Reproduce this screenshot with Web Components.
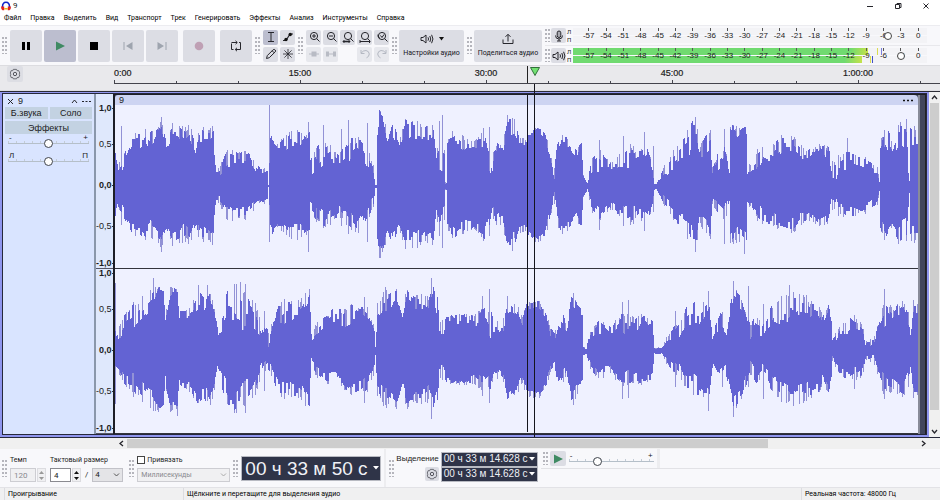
<!DOCTYPE html>
<html lang="ru">
<head>
<meta charset="utf-8">
<title>9</title>
<style>
html,body{margin:0;height:100%}
body{font:9px/12px "Liberation Sans",Arial,sans-serif;color:#1c1c22;background:#fff;overflow:hidden}
</style>
</head>
<body>
<audio-app></audio-app>
<script>
const ui = 'Roboto,"Noto Sans",sans-serif';
function define(name, render, after) {
  customElements.define(name, class extends HTMLElement {
    connectedCallback() {
      if (this.shadowRoot) return;
      const root = this.attachShadow({mode: 'open'});
      root.innerHTML = '<style>*{box-sizing:border-box}:host{display:block;box-sizing:border-box}</style>' + render(this);
      if (after) after(this, root);
    }
  });
}
const A = (el, n, d = '') => el.getAttribute(n) ?? d;

/* Icons */
const S = (w, h, body, extra = '') => `<svg width="${w}" height="${h}" viewBox="0 0 ${w} ${h}" fill="none" stroke="#26262c" stroke-width="1" ${extra}>${body}</svg>`;
const lens = '<circle cx="6" cy="5" r="3.6"/><path d="M8.6 7.6 11.5 10.5"/>';
const gearPath = '<path d="M4 1.2h4l.7 1.6 1.9-.1L12 5.8 10.9 7 12 8 10.6 11.2l-1.9-.1L8 12.7H4l-.7-1.6-1.9.1L0.3 8 1.3 7 .3 5.8 1.4 2.7l1.9.1z" transform="translate(1 .4) scale(.82)" stroke="#55565e"/><circle cx="6" cy="6" r="1.7" stroke="#55565e"/>';
const icons = {
  pause: S(12,12,'<path d="M2 2h3v8H2zM7 2h3v8H7z" fill="#000" stroke="none"/>'),
  play: S(12,12,'<path d="M2 1.5 11 6 2 10.500z" fill="#3f8a63" stroke="none"/>'),
  stop: S(12,12,'<path d="M2 2h8v8H2z" fill="#000" stroke="none"/>'),
  prev: S(12,12,'<path d="M2 2v8" stroke="#9ea4ae"/><path d="M10.500 2v8L4 6z" fill="#9ea4ae" stroke="none"/>'),
  next: S(12,12,'<path d="M10 2v8" stroke="#9ea4ae"/><path d="M1.500 2v8L8 6z" fill="#9ea4ae" stroke="none"/>'),
  record: S(12,12,'<circle cx="6" cy="6" r="4.300" fill="#bfa0b4" stroke="none"/>'),
  loop: S(12,12,'<path d="M3.500 9.500H1.500V3.500M1.500 2.500H7M9 2.500H10.500V9.500H5.500M5.500.8 7.300 2.500 5.500 4.200M7 7.800 5.200 9.500 7 11.200"/>'),
  ibeam: S(12,12,'<path d="M3 1.500h6M3 10.500h6M6 1.500v9"/>'),
  envelope: S(12,12,'<path d="M1 9.500H4L8 3h3" stroke-width="1.200"/><circle cx="4" cy="8.500" r="1.700" fill="#111" stroke="none"/><circle cx="8.200" cy="3.500" r="1.700" fill="#111" stroke="none"/>'),
  pencil: S(12,12,'<path d="M1.500 10.500 2.300 7.600 8.200 1.700Q9.300 1 10.200 2T10.200 3.900L4.300 9.700zM7.200 2.800 9.200 4.800"/>'),
  star: S(12,12,'<path d="M6 1v10M1 6h10M2.400 2.400 9.600 9.600M9.600 2.400 2.400 9.600" stroke-width=".8"/>'),
  zin: S(12,12, lens + '<path d="M4 5h4M6 3v4"/>'),
  zout: S(12,12, lens + '<path d="M4 5h4"/>'),
  zsel: S(12,12, lens + '<path d="M1 10.500h7" stroke-width="1.600"/><path d="M2.500 9 1 10.500 2.500 12M6.500 9 8 10.500 6.500 12" stroke-width=".8"/>'),
  zfit: S(12,12, lens + '<path d="M1 10.500h9M1 9v3M10.500 9v3"/>'),
  ztog: S(12,12, lens + '<path d="M4 7.500Q1 6 2 3.500M4.500 4.500 6 6.500 8 3.500"/>'),
  trim: S(12,12,'<path d="M1 6h10" stroke="#b8bbc4"/><path d="M3.500 3.500h5v5h-5z" fill="#b8bbc4" stroke="none"/>'),
  silence: S(12,12,'<path d="M1 3.500h3v5H1zM8 3.500h3v5H8z" fill="#b8bbc4" stroke="none"/><path d="M4 6h4" stroke="#b8bbc4"/>'),
  undo: S(12,12,'<path d="M2 2v3.500h3.500M2 5.300Q4 2.300 7 2.500 10 3 10.300 6 10 9 7.500 9.800" stroke="#b4b8c2"/>'),
  redo: S(12,12,'<path d="M10 2v3.500H6.500M10 5.300Q8 2.300 5 2.500 2 3 1.700 6 2 9 4.500 9.800" stroke="#b4b8c2"/>'),
  speaker: S(14,12,'<path d="M1 4.500h2L6 2v8L3 7.500H1z"/><path d="M8 4.300Q9 6 8 7.700M9.800 3Q11.700 6 9.800 9M11.600 1.800Q14.300 6 11.600 10.200"/>'),
  share: S(12,12,'<path d="M1 6.500v4h10v-4M6 8.500V1.500M3.500 3.800 6 1.300 8.500 3.800"/>'),
  mic: S(12,12,'<rect x="4.200" y="1" width="3.600" height="6.500" rx="1.800" fill="#aaabb2"/><path d="M2.500 5.500Q2.500 9 6 9T9.500 5.500M6 9v2M4 11h4"/>'),
  gear: S(12,12, gearPath)
};

define('ui-icon', el => `<style>:host{display:inline-flex}svg{display:block}</style>${icons[A(el,'name')]}`);

define('tool-button', el => `<style>
:host{display:block;flex:none;width:var(--w,32px);height:var(--h,32px)}
button{width:100%;height:100%;border:0;border-radius:2px;padding:0;margin:0;background:var(--bg,#dcdde4);color:#16161c;
 font:7px/12px ${ui};display:flex;flex-direction:column;align-items:center;justify-content:center;gap:2px;white-space:nowrap}
</style><button aria-label="${A(el,'label')}"><slot></slot></button>`);

define('grip-handle', () => `<style>:host{width:5px;height:17px;flex:none;
background:radial-gradient(circle at 1px 1px,#b5b5bc 0 .8px,transparent 1px) 0 0/3px 4px}</style>`);

define('menu-bar', () => `<style>
nav{display:flex;gap:9px;padding:0 4px;height:14px;align-items:center}
button{border:0;background:none;padding:0;margin:0;font:7px/12px ${ui};color:#000}
</style><nav>${['Файл','Правка','Выделить','Вид','Транспорт','Трек','Генерировать','Эффекты','Анализ','Инструменты','Справка'].map(t=>`<button>${t}</button>`).join('')}</nav>`);

define('title-bar', () => `<style>
:host{display:flex;align-items:center;height:11px;padding-left:1px;font:8px/11px ${ui}}
span{flex:1;margin-left:2px}
button{border:0;background:none;width:28px;height:11px;padding:0;display:grid;place-items:center}
</style>${S(10,10,'<path d="M1.500 6Q1.500 1.200 5 1.200T8.500 6" stroke="#1226c9" stroke-width="1.500"/><path d="M0 5.500h3.200v3.700H1.500Q0 8.500 0 5.500zM10 5.500H6.800v3.700h1.700Q10 8.500 10 5.500z" fill="#e2211d" stroke="none"/><path d="M3.200 7h3.600v1.500H3.200z" fill="#f5b31c" stroke="none"/>')}
<span>9</span>
<button aria-label="Свернуть">${S(8,8,'<path d="M1 4.500h6"/>')}</button>
<button aria-label="Развернуть">${S(8,8,'<path d="M1.500 2.500h4v4h-4zM3 2.500V1.500h4v4H5.500"/>')}</button>
<button aria-label="Закрыть">${S(8,8,'<path d="M1.500 1.500 6.500 6.500M6.500 1.500 1.500 6.500"/>')}</button>`);

define('transport-bar', () => `<style>
:host{display:flex;align-items:center;gap:2px;padding-left:2px}
grip-handle{margin-right:1px}.rec{margin-left:3px}.loop{margin-left:3px}
.on{--bg:#bcbecf}
</style><grip-handle></grip-handle>` +
[['pause','Пауза'],['play','Воспроизвести','on'],['stop','Стоп'],['prev','К началу'],['next','К концу'],['record','Запись','rec'],['loop','Цикл','loop']]
 .map(([i,l,c=''])=>`<tool-button class="${c}" label="${l}"><ui-icon name="${i}"></ui-icon></tool-button>`).join(''));

define('tool-grid', el => `<style>
:host{display:flex;align-items:center;gap:3px}
div{display:grid;grid-template-columns:repeat(${A(el,'cols')},15px);gap:2px}
tool-button{--w:15px;--h:15px}.on{--bg:#bcbecf}.off{--bg:#e7e8ed}
</style><grip-handle></grip-handle><div>${A(el,'tools').split(' ').map(t=>{
 const [n,c=''] = t.split(':');
 return n === '-' ? '<i></i>' : `<tool-button class="${c}" label="${n}"><ui-icon name="${n}"></ui-icon></tool-button>`;
}).join('')}</div>`);

define('meter-bar', el => {
  const live = el.hasAttribute('live');
  const cells = Array.from({length:20},(_,i)=>`<span>${i*3-57}</span>`).join('');
  return `<style>
:host{display:flex;align-items:center;height:19px;flex:1;min-width:0;padding:0 13px 0 0;gap:1px}
grip-handle{height:13px}
tool-button{--w:15px;--h:15px}
.ch{display:flex;flex-direction:column;font:6px/8px ${ui};width:5px;height:16px}
.m{flex:1;position:relative;height:15px;display:grid;grid-template-rows:7px 7px;gap:1px}
.bar{background:#f3f3f6}
.bar i{display:block;height:100%;background:linear-gradient(90deg,#70da70 0 94%,#c5e24a)}
.a i{width:83.4%}.b i{width:81.500%}
.scale{position:absolute;inset:0;padding-left:7px;display:flex;font:8px/15px "Liberation Sans",sans-serif;color:#222}
.scale span{flex:1 1 0;min-width:0;display:flex;justify-content:center;background:linear-gradient(#555,#555) center top/1px 3px no-repeat}
.pk{position:absolute;width:1px;height:7px;top:0;background:#d9dc52;box-shadow:4px 0 #7a80dd}
.pk.lo{top:8px;box-shadow:2px 0 #4350c8}
input{position:absolute;inset:0;width:100%;height:15px;margin:0;appearance:none;background:none}
input::-webkit-slider-thumb{appearance:none;width:8px;height:8px;border:1px solid #444;border-radius:50%;background:#fff}
</style><grip-handle></grip-handle><tool-button label="${A(el,'label')}"><ui-icon name="${A(el,'icon')}"></ui-icon></tool-button>
<div class="ch"><span>Л</span><span>П</span></div>
<div class="m"><div class="bar a">${live?'<i></i>':''}</div><div class="bar b">${live?'<i></i>':''}</div>
<div class="scale">${cells}</div>${live?'<div class="pk" style="left:86%"></div><div class="pk lo" style="left:84%"></div>':''}
<input type="range" aria-label="${A(el,'label')}" min="0" max="1000" value="${A(el,'value')}"></div>`;
});

define('top-tools', () => `<style>
:host{display:flex;height:40px;background:#f8f8fb;border-top:1px solid #ececf0;gap:3px;align-items:stretch}
.big{display:flex;align-items:center;gap:2px}
.set{--w:65px;--h:32px}.share{--w:68px;--h:32px}
.meters{flex:1;min-width:0;display:flex;flex-direction:column}
.meters meter-bar+meter-bar{border-top:1px solid #e8e8ec;height:20px}
.row{display:flex;gap:5px;align-items:center}
</style>
<transport-bar></transport-bar>
<tool-grid cols="2" tools="ibeam:on envelope pencil star"></tool-grid>
<tool-grid cols="5" tools="zin zout zsel zfit ztog trim:off silence:off - undo:off redo:off"></tool-grid>
<div class="big"><grip-handle></grip-handle><tool-button class="set" label="Настройки аудио"><span class="row"><ui-icon name="speaker"></ui-icon>${S(5,4,'<path d="M0 0h5L2.500 3.500z" fill="#111" stroke="none"/>')}</span>Настройки аудио</tool-button></div>
<div class="big"><grip-handle></grip-handle><tool-button class="share" label="Поделиться аудио"><ui-icon name="share"></ui-icon>Поделиться аудио</tool-button></div>
<div class="meters"><meter-bar icon="mic" label="Уровень записи" value="900"></meter-bar><meter-bar live icon="speaker" label="Уровень воспроизведения" value="936"></meter-bar></div>`);

define('time-ruler', () => `<style>
:host{display:flex;height:26px;background:#e9e9ec;border-top:1px solid #dcdce0;border-bottom:1px solid #dedee2}
.opt{width:114px;flex:none;padding:0 0 0 7px}
.opt tool-button{--w:16px;--h:16px;--bg:#dddee4}
.scale{flex:1;position:relative;height:18px;border-bottom:1px solid #44444c}
.labels{display:flex;font:9px/14px "Liberation Sans",sans-serif;-webkit-text-stroke:.2px #222}
.labels span{flex:186 1 0;text-align:center}
.labels span:first-child{flex-grow:93;text-align:left}
.labels span:last-child{flex-grow:164;padding-left:11px}
.ticks{display:grid;grid-template-columns:repeat(13,62fr) 20fr;height:3px}
.ticks i{border-left:1px solid #44444c;margin-top:1px}
.ticks i:nth-child(3n+1){margin-top:0}
.cur{position:absolute;left:50%;top:0;bottom:0;width:1px;background:#222}
.head{position:absolute;left:calc(50% + 3px);top:1px}
</style><div class="opt"><tool-button label="Параметры шкалы"><ui-icon name="gear"></ui-icon></tool-button></div>
<div class="scale"><div class="labels"><span>0:00</span><span>15:00</span><span>30:00</span><span>45:00</span><span>1:00:00</span></div>
<div class="ticks">${'<i></i>'.repeat(14)}</div><div class="cur"></div>
<div class="head">${S(10,9,'<path d="M.5.5h9L5 8.500z" fill="#72e072" stroke="#31703a"/>')}</div></div>`);

define('knob-slider', el => `<style>
.ends{display:flex;justify-content:space-between;font:8px/8px "Liberation Sans",sans-serif;padding:0 1px}
input{display:block;width:100%;height:9px;margin:-3px 0 0;appearance:none;
 background:repeating-linear-gradient(90deg,#c3ccd6 0 1px,transparent 1px 8px) 0 2px/100% 2px no-repeat,linear-gradient(#b5bfc9,#b5bfc9) 0 4px/100% 1px no-repeat}
input::-webkit-slider-thumb{appearance:none;width:9px;height:9px;border:1px solid #40444c;border-radius:50%;background:#fff}
</style><div class="ends"><span>${A(el,'lo')}</span><span>${A(el,'hi')}</span></div>
<input type="range" aria-label="${A(el,'label')}" min="0" max="100" value="${A(el,'value','50')}">`);

define('track-panel', () => `<style>
:host{width:93px;background:#d9e4ff;border-right:2px solid #8a97ab;padding:2px 2px 0 2px;flex:none}
header{display:flex;align-items:center;gap:4px;height:10px;padding:0 1px 0 2px}
header span{flex:1}
header button{border:0;background:none;padding:0;display:flex}
.btns{display:grid;grid-template-columns:1fr 1fr;gap:2px;margin-top:1px}
.btns button{border:0;padding:0;height:12px;background:#c3d2e2;font:9px/12px "Liberation Sans",sans-serif;color:#1c1c22}
.btns button:last-child{grid-column:span 2;height:13px}
knob-slider{margin:0 3px}knob-slider+knob-slider{margin-top:4px}
</style><header><button aria-label="Закрыть">${S(7,7,'<path d="M1 1 6 6M6 1 1 6"/>')}</button><span>9</span>
<button aria-label="Свернуть">${S(7,5,'<path d="M1 4 3.500 1 6 4"/>')}</button><button aria-label="Меню">${S(9,3,'<path d="M0 1.500h2M3.500 1.500h2M7 1.500h2"/>')}</button></header>
<div class="btns"><button>Б.звука</button><button>Соло</button><button>Эффекты</button></div>
<knob-slider lo="-" hi="+" label="Громкость"></knob-slider><knob-slider lo="Л" hi="П" label="Панорама"></knob-slider>`);

define('amp-ruler', () => `<style>
:host{display:flex;flex-direction:column;width:17px;flex:none;background:#dfe8fc;padding-top:10px}
.c{flex:164 1 0;display:grid;grid-template-rows:1fr 2fr 2fr 2fr 1fr;align-items:center;text-align:right;border-bottom:1px solid #556}
.c+.c{flex-grow:165}
span{font:9px/9px "Liberation Sans",sans-serif;padding-right:2px;white-space:nowrap;justify-self:end;
 background:linear-gradient(#334,#334) right center/2px 1px no-repeat}
span:first-child,span:nth-child(3),span:last-child{font-weight:bold}
span:first-child{align-self:start}span:last-child{align-self:end}
</style>` + ('<div class="c"><span>1,0</span><span>0,5</span><span>0,0</span><span>-0,5</span><span>-1,0</span></div>').repeat(2));

/* Envelope points: position, sustained level, transient level */
const ENV = [
`115 28 35,118 15 25,122 17 32,127 30 45,131 40 53,138 38 55,145 42 60,150 35 57,157 46 62,161 52 70,166 38 50,172 48 66,178 48 63,185 36 60,190 45 63,196 27 45,199 40 62,205 45 58,213 50 60,214 30 36,216 8 20,220 10 22,226 18 36,232 20 40,240 22 36,248 20 37,255 12 25,260 8 20,267 8 18,268 1 2,270 40 50,272 45 54,277 37 45,284 35 53,290 40 56,296 38 58,305 45 52,309 45 58,310 12 28,316 15 40,324 18 48,330 20 45,340 20 34,350 22 50,357 38 50,362 25 50,368 18 38,374 10 25,376 1 2,377 1 2,378 50 62,380 66 78,384 62 70,388 35 60,393 50 68,400 40 46,405 45 68,415 48 68,425 45 60,434 50 63,437 18 36,440 10 45,445 10 40,446 3 5,447 4 6,448 40 47,455 40 60,465 35 50,475 38 48,485 40 60,487 30 50,490 15 45,493 10 25,495 30 45,503 26 42,508 48 70,515 48 68,520 40 50,527 42 48,529 50 55,537 56 60,545 48 56,550 25 40,555 5 20,558 28 45,562 38 53,570 38 48,577 28 40,582 42 45,584 8 12,588 3 6,592 12 28,600 14 38,610 15 25,620 18 35,630 18 42,640 20 38,648 28 40,653 14 22,655 3 6,657 2 5,665 10 22,672 14 35,680 20 50,690 25 60,694 50 68,697 48 70,700 30 40,705 28 50,711 35 58,713 12 20,720 16 36,726 18 42,731 8 18,732 52 63,739 44 60,748 50 63,749 10 20,757 10 35,765 26 42,775 26 45,785 34 50,795 34 50,802 28 42,810 28 38,822 36 43,830 24 40,833 6 30,838 8 26,840 16 32,850 18 36,860 20 32,870 16 28,879 12 20,881 5 8,882 32 48,887 42 62,893 22 50,900 40 62,908 30 62,911 6 9,912 42 62,920 38 58`,
`115 7 20,120 12 28,124 20 38,134 22 50,142 32 55,151 40 64,160 60 65,163 60 62,165 25 40,170 52 65,177 55 62,179 30 40,190 32 44,197 34 62,204 34 55,209 45 66,214 35 42,217 12 24,222 20 50,228 30 66,234 30 68,242 20 66,248 20 65,253 20 55,258 14 38,263 8 26,268 4 22,272 18 28,277 25 50,288 28 52,300 30 54,309 50 62,311 6 18,315 12 26,325 20 36,337 20 46,343 16 44,352 26 48,362 28 48,370 24 42,375 14 24,376 3 5,378 30 48,384 36 60,390 40 62,397 52 62,403 30 40,407 50 62,415 40 56,425 40 58,429 34 56,434 50 70,438 32 56,440 14 30,444 10 36,447 26 38,455 26 36,465 28 38,473 24 36,485 26 44,491 10 46,495 16 28,504 20 36,508 38 56,517 34 48,523 22 34,527 42 48,540 42 50,547 32 38,551 12 24,555 6 18,560 22 48,567 14 28,571 42 56,577 32 50,583 30 45,584 3 5,587 2 4,592 14 24,600 16 32,612 14 24,622 18 40,635 14 38,643 28 36,653 22 32,655 2 3,662 2 4,668 6 16,680 8 32,687 22 45,700 24 52,710 44 48,713 5 22,722 16 42,728 10 32,731 30 45,736 48 66,744 40 52,750 10 32,752 7 28,758 16 40,764 12 26,775 26 50,785 26 56,800 34 60,812 30 50,820 34 48,824 25 35,830 38 46,833 24 36,834 5 12,842 14 28,852 16 34,864 14 28,867 3 10,875 4 12,880 18 30,886 22 50,895 28 44,905 30 50,912 14 40,915 34 50,920 34 50`];
const SPIKES = [
 {121:[61,39],161:[70,66],212:[61,59],269:[82,56],308:[65,66],324:[62,42],342:[58,40],349:[67,48],368:[64,56],440:[66,50],443:[72,62],490:[60,50],508:[72,48],515:[68,52],600:[47,44],624:[51,40],645:[55,45],654:[41,26],696:[70,66],726:[58,58],746:[60,68],783:[52,40],849:[49,24],902:[65,55],908:[68,55]},
 {115:[68,53],153:[73,60],177:[50,65],198:[66,52],207:[66,50],240:[69,46],264:[40,40],309:[62,52],365:[54,52],386:[64,54],432:[73,68],483:[55,45],490:[62,52],508:[55,45],574:[58,54],623:[49,48],629:[51,47],676:[40,36],709:[60,60],735:[70,66],750:[65,36],765:[47,48],791:[66,50],808:[56,50],856:[36,38],886:[62,48]}];
function rnd(n) { const v = Math.sin(n * 127.1 + 31.7) * 43758.5453; return v - Math.floor(v); }
function wavePaths(ch) {
  const pts = ENV[ch].split(',').map(s => s.split(' ').map(Number));
  let dark = '', light = '', k = 0;
  for (let x = 115; x < 920; x++) {
    while (k < pts.length - 2 && pts[k + 1][0] <= x) k++;
    const [x0, b0, p0] = pts[k], [x1, b1, p1] = pts[k + 1];
    const t = Math.min(1, (x - x0) / (x1 - x0));
    const b = b0 + (b1 - b0) * t, p = p0 + (p1 - p0) * t;
    const g = Math.floor(x / 2) + ch * 977;
    const r = rnd(g), q = rnd(x * 3 + ch * 511);
    const up = b + (p - b) * r;
    const dn = (b + (p - b) * (.1 + .85 * rnd(g + 5000))) * .9;
    let lu = q > .72 ? b + (p - b) * q * 1.05 : up, ld = q > .72 ? (b + (p - b) * q) * .95 : dn;
    const s = SPIKES[ch][x];
    if (s) { lu = s[0]; ld = s[1]; }
    const R = Math.round, d = i => `M${x - 115} ${82 - R(i[0])}h1V${82 + R(i[1])}h-1z`;
    dark += d([up, dn]);
    light += d([Math.max(up, lu), Math.max(dn, ld)]);
  }
  return `<path fill="#9292d6" d="${light}"/><path fill="#6363d3" d="${dark}"/>`;
}
define('wave-channel', el => `<style>
:host{min-height:0;background:#eff1ff;border-bottom:1px solid #33343c}
svg{display:block;width:100%;height:100%}
</style><svg viewBox="0 0 805 164" preserveAspectRatio="none" shape-rendering="crispEdges" role="img" aria-label="Форма волны">${wavePaths(+A(el,'index'))}</svg>`);

define('wave-clip', () => `<style>
:host{flex:1;min-width:0;display:flex;background:#41455c;border-left:2px solid #1d1e26;border-top:1px solid #1d1e26}
.clip{flex:1;min-width:0;display:flex;flex-direction:column;border-radius:3px 4px 0 0;overflow:hidden}
header{height:10px;flex:none;background:#cdd4f2;display:flex;justify-content:space-between;align-items:center;padding:0 5px 0 4px;line-height:10px}
header button{border:0;background:none;padding:0;display:flex}
wave-channel{flex:164 1 0}wave-channel+wave-channel{flex-grow:165}
.tail{width:8px;border-left:2px solid #888b99;border-right:1px solid #222}
</style><div class="clip"><header><span>9</span><button aria-label="Меню клипа">${S(10,3,'<path d="M0 1.500h2M4 1.500h2M8 1.500h2" stroke-width="1.500" stroke="#111"/>')}</button></header>
<wave-channel index="0"></wave-channel><wave-channel index="1"></wave-channel></div><div class="tail"></div>`);

define('scroll-bar', el => {
  const v = el.hasAttribute('vertical');
  return `<style>
:host{display:flex;flex-direction:${v?'column':'row'};background:#f0f0f0;${v?'width:11px':'height:11px'};flex:none}
button{border:0;background:none;padding:0;width:11px;height:11px;display:grid;place-items:center}
.r{flex:1;display:flex;flex-direction:inherit}
.t{background:#cdcdcd;flex:0 0 ${A(el,'size')};margin:${v?'0 1px':'1px 0'}}
</style><button aria-label="Назад">${S(7,7,v?'<path d="M1 5 3.500 2 6 5" stroke-width="1.300"/>':'<path d="M5 1 2 3.500 5 6" stroke-width="1.300"/>')}</button><div class="r"><div class="t"></div></div>
<button aria-label="Вперёд">${S(7,7,v?'<path d="M1 2 3.500 5 6 2" stroke-width="1.300"/>':'<path d="M2 1 5 3.500 2 6" stroke-width="1.300"/>')}</button>`;
});

define('track-area', () => `<style>
:host{min-height:0;display:flex;position:relative;border-top:1px solid #2b2c35}
.track{flex:1;min-width:0;display:flex;border:2px solid #8f95ee;border-width:1px 2px 2px}
.in{flex:1;min-width:0;display:flex;border:1px solid #26283a}
.line{position:absolute;top:0;bottom:0;left:calc(114px + (100% - 114px)*.5085);width:1px;background:#15151d}
.line.sel{left:calc(114px + (100% - 114px)*.5);top:3px;bottom:5px}
.line.play{top:-8px}
:host{border-bottom:1px solid #26283a}
</style><div class="track"><div class="in"><track-panel></track-panel><amp-ruler></amp-ruler><wave-clip></wave-clip></div></div>
<scroll-bar vertical size="95%"></scroll-bar><div class="line sel"></div><div class="line play"></div>`);

define('time-field', el => `<style>
:host{display:block}
button{display:flex;align-items:center;justify-content:space-between;width:100%;border:1px solid #b8bac2;background:#2f3448;color:#f0f1f6;margin:0;
 padding:${el.hasAttribute('big')?'0 1px 0 3px':'0 2px 0 2px'};height:${el.hasAttribute('big')?25:15}px;font:${el.hasAttribute('big')?19:10}px/1 "Liberation Sans",sans-serif;white-space:nowrap}
</style><button aria-label="${A(el,'label')}"><slot></slot>${S(6,4,'<path d="M0 0h6L3 3.500z" fill="#fff" stroke="none"/>')}</button>`);

define('signature-bar', () => `<style>
:host{display:flex;align-items:center;gap:3px;padding-left:2px;font:7px/12px ${ui}}
.g{display:flex;flex-direction:column;gap:2px}
.r{display:flex;align-items:center;gap:1px;height:15px}
label{display:block;white-space:nowrap;height:12px}
input{width:26px;height:14px;border:1px solid #8a8a90;background:#fff;padding:0 3px;font:8px/12px ${ui};color:#222}
input:disabled,select:disabled{border-color:#cdcdd2;background:#f0f0f2;color:#88888e;opacity:1}
.n{width:21px}
.s{display:flex;flex-direction:column;width:9px;height:14px;background:#f0f0f2;border:1px solid #dcdce0;align-items:center;justify-content:space-around}
.w{position:relative;display:block}
.w svg{position:absolute;right:3px;top:5px;pointer-events:none}
select{appearance:none;border:1px solid #c2c2c8;background:#e4e4e7;border-radius:0;height:14px;width:31px;padding:0 0 0 2px;margin:0;font:8px/12px ${ui};color:#222;display:block}
.g+.g{margin-left:1px}
i{font-style:normal;font-size:8px;padding:0 3px}
.snap select{width:93px;padding-left:3px;font-size:7px}
.snap label{display:flex;align-items:center;gap:2px}
.snap input{appearance:none;width:8px;height:8px;border:1px solid #444;padding:0;margin:0}
.x{margin-left:3px}
</style><grip-handle></grip-handle>
<div class="g"><label for="t">Темп</label><div class="r"><input id="t" value="120" disabled><span class="s">${spin('#999')}</span></div></div>
<div class="g"><label for="n">Тактовый размер</label><div class="r"><input class="n" id="n" value="4"><span class="s">${spin('#111')}</span><i>/</i><span class="w"><select aria-label="Доля"><option>4</option></select>${S(7,4,'<path d="M1 .5 3.500 3 6 .5" stroke="#555"/>')}</span></div></div>
<grip-handle class="x"></grip-handle>
<div class="g snap"><label><input type="checkbox">Привязать</label><div class="r"><span class="w"><select aria-label="Шаг привязки" disabled><option>Миллисекунды</option></select>${S(7,4,'<path d="M1 .5 3.500 3 6 .5" stroke="#aaa"/>')}</span></div></div>`);
function spin(c) { return S(5,3,`<path d="M0 3 2.500 0 5 3z" fill="${c}" stroke="none"/>`) + S(5,3,`<path d="M0 0 2.500 3 5 0z" fill="${c}" stroke="none"/>`); }

define('bottom-tools', () => `<style>
:host{display:flex;height:39px;background:#f8f8fb;gap:3px;align-items:center;border-bottom:1px solid #e2e2e6}
.big{width:140px}
.sep{width:3px;align-self:stretch;background:#ededf0}
.big+.sep{width:2px}
.sel{display:grid;grid-template-columns:auto 97px;gap:0 2px;justify-items:end;align-items:center;font:8px/12px "Liberation Sans",sans-serif;padding-bottom:3px;margin-left:-1px}
.sel time-field{width:97px}
.sel tool-button{--w:14px;--h:14px}
.end{flex:1;align-self:stretch;display:flex;flex-direction:column}
.sp{height:20px;border-bottom:1px solid #e2e2e6;display:flex;align-items:center;gap:3px;padding-left:2px}
.sp grip-handle{height:13px;margin-right:-1px}
.sp tool-button{--w:16px;--h:15px}
.sp knob-slider{width:85px}
</style><signature-bar></signature-bar><grip-handle></grip-handle>
<time-field class="big" big label="Время">00 ч 33 м 50 с</time-field><div class="sep"></div><grip-handle></grip-handle>
<div class="sel"><span>Выделение</span><time-field label="Начало выделения">00 ч 33 м 14.628 с</time-field><tool-button label="Параметры выделения"><ui-icon name="gear"></ui-icon></tool-button><time-field label="Конец выделения">00 ч 33 м 14.628 с</time-field></div>
<div class="end"><div class="sp"><grip-handle></grip-handle><tool-button label="Воспроизвести на скорости"><ui-icon name="play"></ui-icon></tool-button><knob-slider lo="-" hi="+" value="32" label="Скорость"></knob-slider><div class="sep"></div></div></div>`);

define('status-bar', () => `<style>
:host{display:flex;height:12px;background:#f0f0f1;font:7px/12px ${ui};color:#000;white-space:nowrap;padding-left:4px}
span{flex:none;padding-left:3px;border-left:1px solid #dcdce0}
.a{width:179px}.b{flex:1}.c{width:139px}
</style><span class="a">Проигрывание</span><span class="b">Щёлкните и перетащите для выделения аудио</span><span class="c">Реальная частота: 48000 Гц</span>`);

define('audio-app', () => `<style>
:host{display:flex;flex-direction:column;height:100vh}
title-bar,menu-bar,top-tools,time-ruler,bottom-tools,status-bar,.h{flex:none}
track-area{flex:1 1 0}
.h{padding-left:116px;padding-right:11px;background:#f0f0f0}
</style><title-bar></title-bar><menu-bar></menu-bar><top-tools></top-tools><time-ruler></time-ruler><track-area></track-area>
<div class="h"><scroll-bar size="81%"></scroll-bar></div><bottom-tools></bottom-tools><status-bar></status-bar>`);
</script>
</body>
</html>
